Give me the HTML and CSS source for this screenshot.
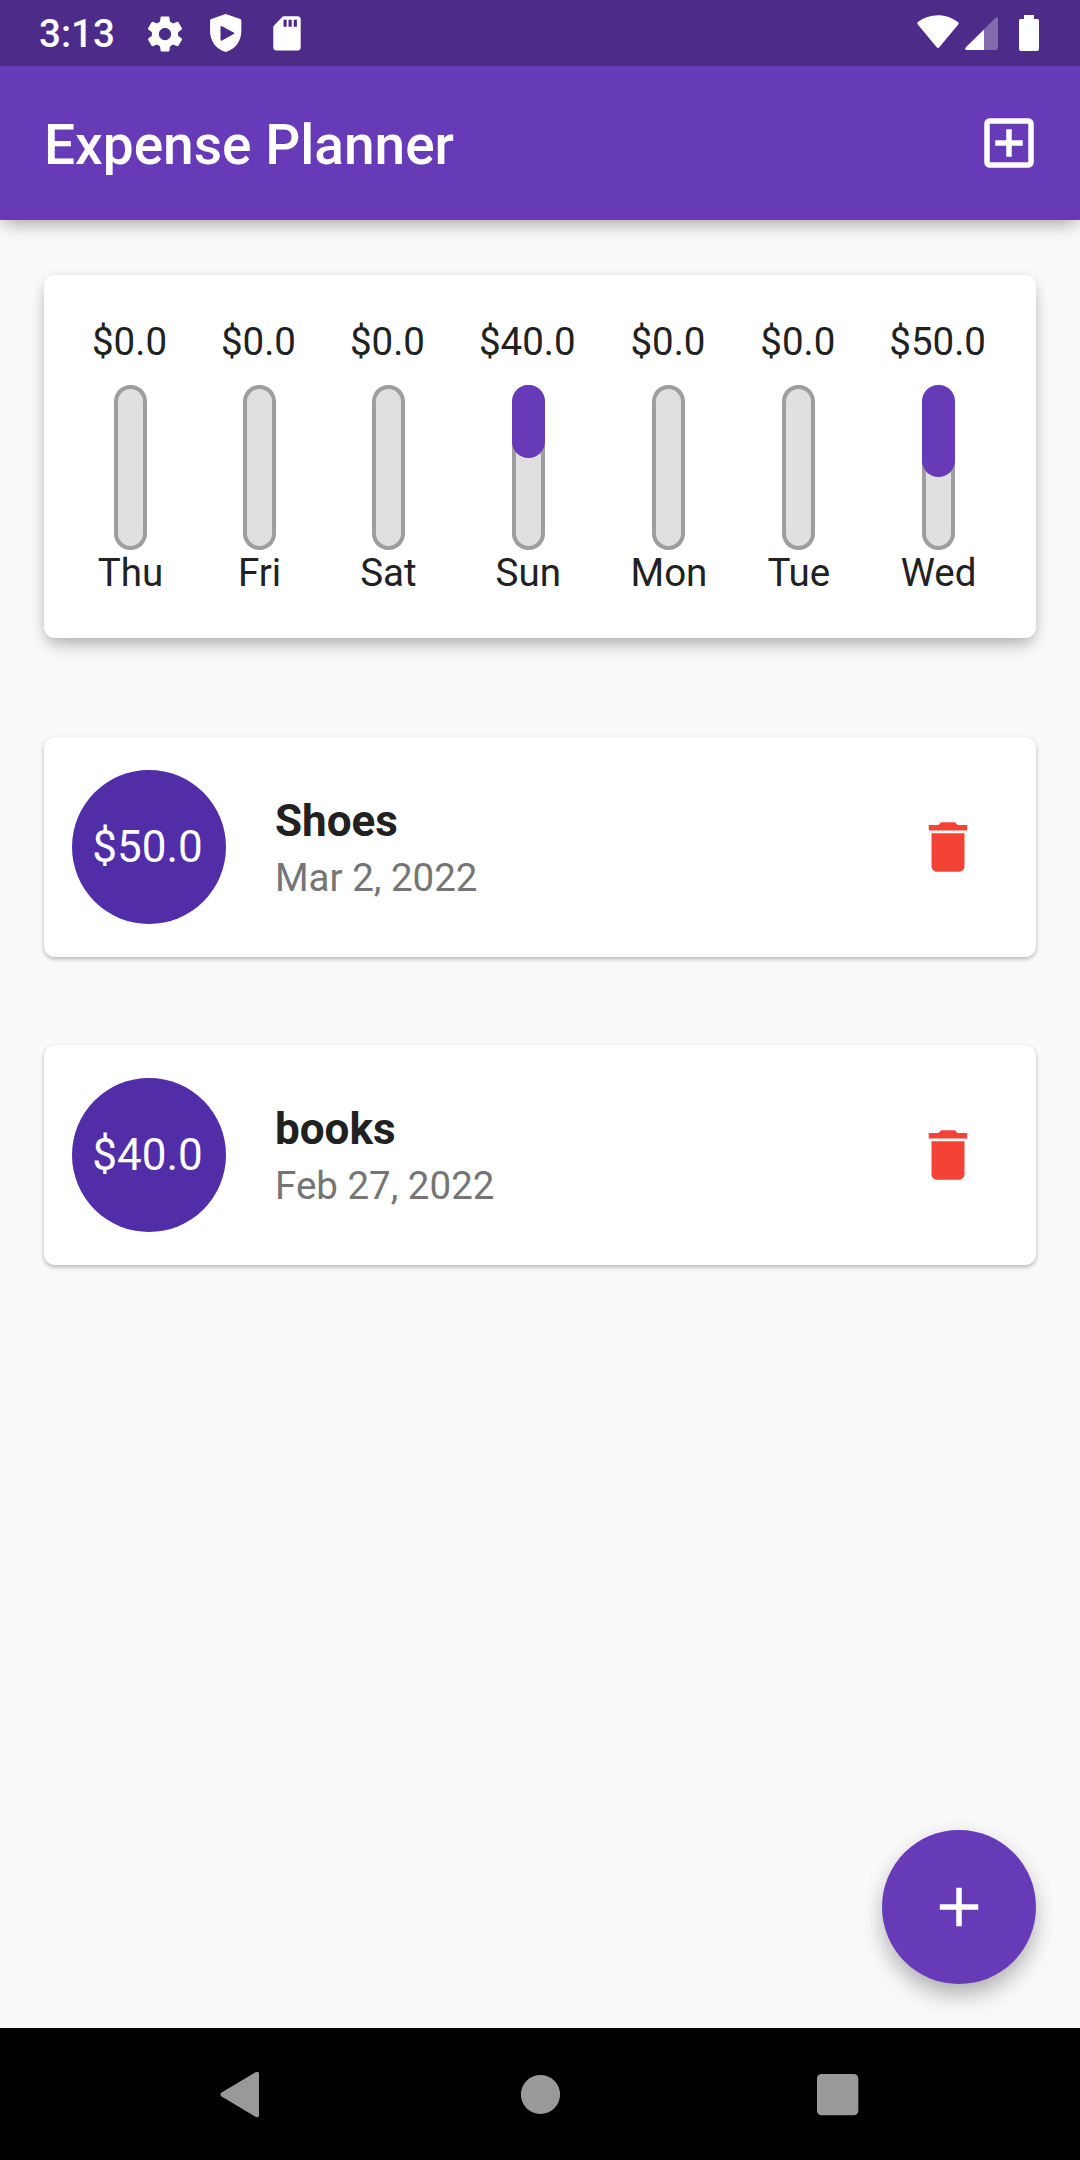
FILE: index.html
```html
<!DOCTYPE html>
<html lang="en">
<head>
<meta charset="utf-8">
<title>Expense Planner</title>
<link rel="stylesheet" href="styles.css">
</head>
<body>
<div class="screen">
  <header class="top">
    <div class="status-bar">
      <div class="status-left">
        <span class="clock">3:13</span>
        <svg class="icon-gear" viewBox="0 0 24 24"><path d="M19.43 12.98c.04-.32.07-.64.07-.98s-.03-.66-.07-.98l2.11-1.65c.19-.15.24-.42.12-.64l-2-3.46c-.12-.22-.39-.3-.61-.22l-2.49 1c-.52-.4-1.08-.73-1.69-.98l-.38-2.65C14.46 2.18 14.25 2 14 2h-4c-.25 0-.46.18-.49.42l-.38 2.65c-.61.25-1.17.59-1.69.98l-2.49-1c-.23-.09-.49 0-.61.22l-2 3.46c-.13.22-.07.49.12.64l2.11 1.65c-.04.32-.07.65-.07.98s.03.66.07.98l-2.11 1.65c-.19.15-.24.42-.12.64l2 3.46c.12.22.39.3.61.22l2.49-1c.52.4 1.08.73 1.69.98l.38 2.65c.03.24.24.42.49.42h4c.25 0 .46-.18.49-.42l.38-2.65c.61-.25 1.17-.59 1.69-.98l2.49 1c.23.09.49 0 .61-.22l2-3.46c.12-.22.07-.49-.12-.64l-2.11-1.65zM12 15.5c-1.93 0-3.5-1.57-3.5-3.5s1.57-3.5 3.5-3.5 3.5 1.57 3.5 3.5-1.57 3.5-3.5 3.5z"/></svg>
        <svg class="icon-shield" viewBox="0 0 32 38"><path fill-rule="evenodd" d="M15.7 0L30.2 5Q31.3 5.400 31.300 6.600V17.500C31.300 27 25 35.500 15.700 38C6.400 35.500 .1 27 .1 17.500V6.600Q.1 5.400 1.200 5ZM10.500 13.200V25.500Q10.500 27.200 12 26.400L23.700 20Q24.800 19.200 23.700 18.400L12 12.300Q10.500 11.500 10.500 13.200Z"/></svg>
        <svg class="icon-sd" viewBox="0 0 28 35"><path fill-rule="evenodd" d="M10.500 .3H24.500Q27.700 .3 27.700 3.500V31.300Q27.700 34.500 24.500 34.500H3.500Q.3 34.500 .3 31.300V11.200Q.3 10.200 1 9.500L9 1.200Q9.700 .3 10.500 .3ZM10.500 3.800V10.700H13.700V3.800ZM15.500 3.800V10.700H18.700V3.800ZM20.700 3.800V10.700H23.900V3.800Z"/></svg>
      </div>
      <div class="status-right">
        <svg class="icon-wifi" viewBox="0 0 42 34"><path d="M.8 7C.1 8 .1 8.700 .8 9.500L19.500 32Q21 34 22.500 32L41.200 9.500Q42.200 8.200 41 7.200C35 2.500 28.500 .2 21 .2C13.500 .2 6.800 2.500 .8 7Z"/></svg>
        <svg class="icon-signal" viewBox="0 0 33 33"><path class="signal-dim" d="M19 12.500L30.500 .8Q33 -.9 33 2V31Q33 33 31 33H19Z"/><path d="M19 12.500V33H2Q-.8 33 .6 30.600Z"/></svg>
        <svg class="icon-battery" viewBox="0 0 20 36"><path d="M5 0H15V4H18.500Q20 4 20 5.500V34Q20 36 18 36H2Q0 36 0 34V5.500Q0 4 1.500 4H5Z"/></svg>
      </div>
    </div>
    <div class="app-bar">
      <h1 class="app-title">Expense Planner</h1>
      <svg class="icon" viewBox="0 0 24 24"><path d="M19 3H5c-1.110 0-2 .89-2 2v14c0 1.100.89 2 2 2h14c1.100 0 2-.9 2-2V5c0-1.100-.9-2-2-2zm0 16H5V5h14v14zm-8-2h2v-4h4v-2h-4V7h-2v4H7v2h4z"/></svg>
    </div>
  </header>

  <main class="content">
    <section class="card chart">
      <div class="day"><span class="amount">$0.0</span><div class="bar"></div><span class="label">Thu</span></div>
      <div class="day"><span class="amount">$0.0</span><div class="bar"></div><span class="label">Fri</span></div>
      <div class="day"><span class="amount">$0.0</span><div class="bar"></div><span class="label">Sat</span></div>
      <div class="day"><span class="amount">$40.0</span><div class="bar"><div class="fill" style="height:44.44%"></div></div><span class="label">Sun</span></div>
      <div class="day"><span class="amount">$0.0</span><div class="bar"></div><span class="label">Mon</span></div>
      <div class="day"><span class="amount">$0.0</span><div class="bar"></div><span class="label">Tue</span></div>
      <div class="day"><span class="amount">$50.0</span><div class="bar"><div class="fill" style="height:55.56%"></div></div><span class="label">Wed</span></div>
    </section>

    <section class="list">
      <article class="card item">
        <div class="avatar">$50.0</div>
        <div class="item-text"><h2 class="item-title">Shoes</h2><p class="item-date">Mar 2, 2022</p></div>
        <svg class="icon delete" viewBox="0 0 24 24"><path d="M6 19c0 1.100.9 2 2 2h8c1.100 0 2-.9 2-2V7H6v12zM19 4h-3.500l-1-1h-5l-1 1H5v2h14V4z"/></svg>
      </article>
      <article class="card item">
        <div class="avatar">$40.0</div>
        <div class="item-text"><h2 class="item-title">books</h2><p class="item-date">Feb 27, 2022</p></div>
        <svg class="icon delete" viewBox="0 0 24 24"><path d="M6 19c0 1.100.9 2 2 2h8c1.100 0 2-.9 2-2V7H6v12zM19 4h-3.500l-1-1h-5l-1 1H5v2h14V4z"/></svg>
      </article>
    </section>

    <div class="fab"><svg class="icon" viewBox="0 0 24 24"><path d="M19 13h-6v6h-2v-6H5v-2h6V5h2v6h6v2z"/></svg></div>
  </main>

  <nav class="nav-bar">
    <svg class="nav-icon" viewBox="0 0 48 48"><path d="M5.200 22.800L39.500 2.300Q43 .5 43 4V45Q43 48.500 39.500 46.700L5.200 26.200Q3.600 24.500 5.200 22.800Z"/></svg>
    <svg class="nav-icon" viewBox="0 0 48 48"><circle cx="25.500" cy="24.500" r="19.600"/></svg>
    <svg class="nav-icon" viewBox="0 0 48 48"><rect x="3" y="4" width="41.300" height="41.300" rx="4.500"/></svg>
  </nav>
</div>
</body>
</html>
```
FILE: styles.css
```css
* { box-sizing: border-box; }

body {
  margin: 0;
  font-family: Roboto, "Liberation Sans", sans-serif;
  color: #212121;
  background: #fafafa;
}

h1, h2, p { margin: 0; }
svg { display: block; flex: none; fill: currentColor; }

.screen {
  width: 1080px;
  height: 2160px;
  display: flex;
  flex-direction: column;
  overflow: hidden;
}

.top {
  color: #fff;
  background: #673ab7;
  box-shadow: 0 9px 18px -4px rgba(0, 0, 0, .27), 0 2px 12px rgba(0, 0, 0, .08);
}

.status-bar {
  height: 66px;
  padding: 0 41px 0 39px;
  display: flex;
  justify-content: space-between;
  background: #4d2c89;
}
.status-left, .status-right { display: flex; align-items: flex-start; }
.clock {
  width: 104.500px;
  padding-top: 11px;
  font-size: 38.500px;
  font-weight: 500;
  line-height: 46px;
}
.icon-gear { width: 42px; height: 42px; margin-top: 12.500px; }
.icon-shield { width: 32px; height: 38px; margin: 14px 0 0 24px; }
.icon-sd { width: 28px; height: 35px; margin: 16px 0 0 31px; }
.icon-wifi { width: 42px; height: 34px; margin: 15px 6px 0 0; }
.icon-signal { width: 33px; height: 33px; margin: 17px 21px 0 0; }
.icon-battery { width: 20px; height: 36px; margin-top: 15px; }
.signal-dim { opacity: .3; }

.app-bar {
  height: 154px;
  padding: 0 38.500px 0 44px;
  display: flex;
  align-items: center;
  justify-content: space-between;
}
.app-title { font-size: 55px; font-weight: 500; line-height: 64px; padding-top: 4px; }
.icon { width: 66px; height: 66px; }

.content {
  position: relative;
  flex: 1;
  padding: 55px 44px 0;
}

.card {
  background: #fff;
  border-radius: 11px;
}

.chart {
  height: 363px;
  padding: 44px 22px 0;
  display: flex;
  justify-content: space-around;
  align-items: flex-start;
  box-shadow: 0 9px 18px -3px rgba(0, 0, 0, .27), 0 2px 12px rgba(0, 0, 0, .08);
}
.day {
  display: flex;
  flex-direction: column;
  align-items: center;
  font-size: 38.500px;
  line-height: 45px;
}
.amount { margin: 0 1px 0 -1px; }
.bar {
  width: 33px;
  height: 165px;
  margin-top: 21px;
  border-radius: 17px;
  background: #e0e0e0;
  box-shadow: inset 0 0 0 4px #9e9e9e;
}
.fill { border-radius: 17px; background: #673ab7; }

.list {
  margin-top: 99px;
  display: flex;
  flex-direction: column;
  gap: 88px;
}
.item {
  height: 220px;
  padding: 0 55px 0 27.500px;
  display: flex;
  align-items: center;
  box-shadow: 0 2px 4px rgba(0, 0, 0, .24), 0 2px 6px rgba(0, 0, 0, .06);
}
.avatar {
  width: 154px;
  height: 154px;
  padding-right: 2px;
  border-radius: 50%;
  display: flex;
  align-items: center;
  justify-content: center;
  color: #fff;
  background: #512da8;
  font-size: 44px;
}
.item-text {
  flex: 1;
  margin-left: 49.500px;
  display: flex;
  flex-direction: column;
  gap: 8px;
}
.item-title { font-size: 44px; font-weight: 700; line-height: 52px; }
.item-date { font-size: 38.500px; line-height: 45px; color: #757575; }
.delete { color: #f44336; }

.fab {
  position: absolute;
  right: 44px;
  bottom: 44px;
  width: 154px;
  height: 154px;
  border-radius: 50%;
  display: flex;
  align-items: center;
  justify-content: center;
  color: #fff;
  background: #673ab7;
  box-shadow: 0 14px 26px -4px rgba(0, 0, 0, .28), 0 4px 22px rgba(0, 0, 0, .09);
}

.nav-bar {
  height: 132px;
  padding: 0 218px 0 216px;
  display: flex;
  align-items: center;
  justify-content: space-between;
  color: #999;
  background: #000;
}
.nav-icon { width: 48px; height: 48px; overflow: visible; }
```
